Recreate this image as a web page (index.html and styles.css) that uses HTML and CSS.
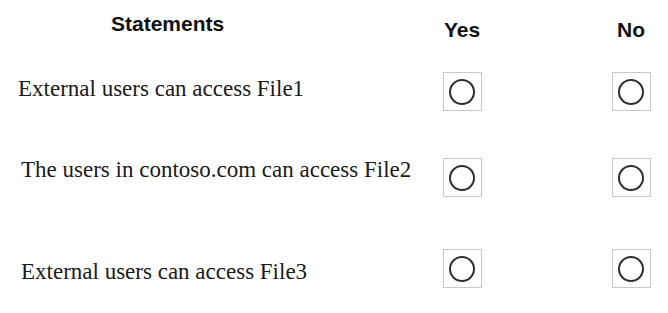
FILE: index.html
```html
<!DOCTYPE html>
<html lang="en">
  <head>
    <meta charset="UTF-8" />
    <meta name="viewport" content="width=device-width, initial-scale=1.0" />
    <title>Statements</title>
    <link rel="stylesheet" href="styles.css">
  </head>
  <body>
    <div class="sheet">
      <div class="row head">
        <div class="statement">Statements</div>
        <div class="choice">Yes</div>
        <div class="choice no">No</div>
      </div>

      <div class="row first">
        <div class="statement">External users can access File1</div>
        <div class="choice"><span class="box"><span class="radio"></span></span></div>
        <div class="choice no"><span class="box"><span class="radio"></span></span></div>
      </div>

      <div class="row second">
        <div class="statement">The users in contoso.com can access File2</div>
        <div class="choice"><span class="box"><span class="radio"></span></span></div>
        <div class="choice no"><span class="box"><span class="radio"></span></span></div>
      </div>

      <div class="row third">
        <div class="statement">External users can access File3</div>
        <div class="choice"><span class="box"><span class="radio"></span></span></div>
        <div class="choice no"><span class="box"><span class="radio"></span></span></div>
      </div>
    </div>
  </body>
</html>
```

FILE: styles.css
```css
body {
  margin: 0;
  background: #fff;
  color: #1a1a1a;
}
.sheet {
  display: flex;
  flex-direction: column;
  padding: 12px 0 0 18px;
}
.row {
  display: grid;
  grid-template-columns: 424px 40px 129px 40px;
  align-items: center;
}
.row .no {
  grid-column: 4;
}
.statement {
  font-family: "Liberation Serif", "Times New Roman", serif;
  font-size: 23px;
  white-space: nowrap;
}
.choice {
  display: flex;
  justify-content: center;
}
.box {
  width: 37px;
  height: 37px;
  border: 1px solid #c8c8c8;
  display: flex;
  align-items: center;
  justify-content: center;
}
.radio {
  width: 22px;
  height: 22px;
  border: 2px solid #2e2e2e;
  border-radius: 50%;
}

.head {
  align-items: start;
  font-family: "Liberation Sans", Arial, sans-serif;
  font-weight: bold;
  font-size: 21px;
  color: #111;
}
.head .statement {
  font-family: inherit;
  font-size: inherit;
  padding-left: 93px;
}
.head .choice {
  margin-top: 6px;
}

.first {
  margin-top: 30px;
}
.first .statement {
  padding-bottom: 5px;
}
.second {
  margin-top: 46px;
}
.second .statement {
  padding: 0 0 15px 3px;
}
.third {
  margin-top: 51px;
}
.third .statement {
  padding: 6px 0 0 3px;
}
```
